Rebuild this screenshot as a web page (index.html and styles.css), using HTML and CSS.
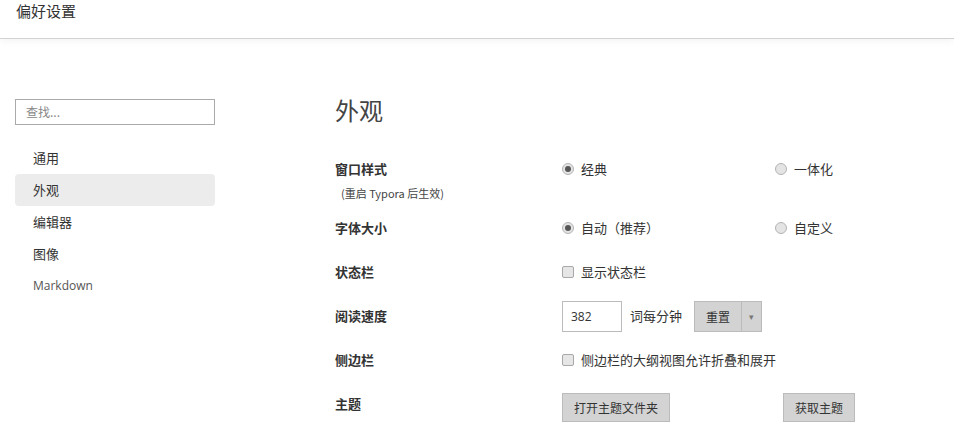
FILE: index.html
```html
<!DOCTYPE html>
<html lang="zh-CN">
<head>
    <meta charset="UTF-8">
    <title>偏好设置</title>
    <link rel="stylesheet" href="styles.css">
</head>
<body>
    <div class="header">偏好设置</div>
    <div class="layout">
        <div class="sidebar">
            <input class="search" type="text" placeholder="查找...">
            <ul class="nav">
                <li>通用</li>
                <li class="active">外观</li>
                <li>编辑器</li>
                <li>图像</li>
                <li class="latin">Markdown</li>
            </ul>
        </div>
        <div class="main">
            <h1>外观</h1>
            <div class="rows">
                <div class="row tall">
                    <div class="label">窗口样式<span class="hint">(重启 Typora 后生效)</span></div>
                    <div class="opt"><span class="radio checked"></span>经典</div>
                    <div class="opt"><span class="radio"></span>一体化</div>
                </div>
                <div class="row">
                    <div class="label">字体大小</div>
                    <div class="opt"><span class="radio checked"></span>自动（推荐）</div>
                    <div class="opt"><span class="radio"></span>自定义</div>
                </div>
                <div class="row">
                    <div class="label">状态栏</div>
                    <div class="opt wide"><span class="check"></span>显示状态栏</div>
                </div>
                <div class="row">
                    <div class="label">阅读速度</div>
                    <div class="opt wide">
                        <input class="num" type="text" value="382">
                        <span class="unit">词每分钟</span>
                        <span class="split">
                            <button class="btn">重置</button><button class="btn caret">&#9662;</button>
                        </span>
                    </div>
                </div>
                <div class="row">
                    <div class="label">侧边栏</div>
                    <div class="opt wide"><span class="check"></span>侧边栏的大纲视图允许折叠和展开</div>
                </div>
                <div class="row theme">
                    <div class="label">主题</div>
                    <div class="opt"><button class="btn">打开主题文件夹</button></div>
                    <div class="opt right"><button class="btn">获取主题</button></div>
                </div>
            </div>
        </div>
    </div>
</body>
</html>
```

FILE: styles.css
```css
body {
    margin: 0;
    font-family: "Noto Sans CJK SC", "Open Sans", sans-serif;
    color: #333;
    background: #fff;
}
.header {
    height: 38px;
    padding-left: 16px;
    font-size: 15px;
    line-height: 22px;
    color: #333;
    border-bottom: 1px solid #d2d2d2;
    box-shadow: 0 2px 8px rgba(0,0,0,0.05);
}
.layout {
    display: flex;
    padding-top: 59px;
}
.sidebar {
    width: 200px;
    margin-left: 15px;
}
.search {
    box-sizing: border-box;
    width: 200px;
    height: 26px;
    margin: 0;
    padding: 0 10px;
    border: 1px solid #aaa;
    font-family: inherit;
    font-size: 12px;
    color: #333;
    outline: none;
}
.search::placeholder {
    color: #888;
}
.nav {
    list-style: none;
    margin: 17px 0 0;
    padding: 0;
}
.nav li {
    height: 32px;
    line-height: 31px;
    padding-left: 18px;
    font-size: 13px;
    color: #333;
    border-radius: 4px;
}
.nav li.active {
    background: #ececec;
}
.nav li.latin {
    font-family: "Open Sans", sans-serif;
    font-size: 12px;
    color: #555;
}
.main {
    margin-left: 120px;
}
h1 {
    margin: -6px 0 0;
    font-size: 24px;
    font-weight: normal;
    line-height: 36px;
    color: #444;
}
.rows {
    margin-top: 29px;
}
.row {
    display: flex;
    align-items: flex-start;
    height: 44px;
    font-size: 13px;
    line-height: 24px;
}
.row.tall {
    height: 59px;
}
.label {
    width: 227px;
    font-weight: bold;
    color: #333;
}
.hint {
    display: block;
    margin-left: 6px;
    font-size: 11px;
    font-weight: normal;
    color: #444;
    line-height: 24px;
}
.opt {
    width: 213px;
    display: flex;
    align-items: center;
    height: 24px;
}
.opt.wide {
    width: auto;
}
.opt.right {
    margin-left: 8px;
}
.row.theme .opt {
    align-items: flex-start;
    padding-top: 1px;
}
.radio {
    box-sizing: border-box;
    width: 12px;
    height: 12px;
    margin-right: 7px;
    border: 1px solid #b4b4b4;
    border-radius: 50%;
    background: #e4e4e4;
    position: relative;
}
.radio.checked::after {
    content: "";
    position: absolute;
    left: 2px;
    top: 2px;
    width: 6px;
    height: 6px;
    border-radius: 50%;
    background: #555;
}
.check {
    box-sizing: border-box;
    width: 12px;
    height: 12px;
    margin-right: 7px;
    border: 1px solid #a8a8a8;
    border-radius: 2px;
    background: #e6e6e6;
}
.num {
    box-sizing: border-box;
    width: 60px;
    height: 31px;
    margin: 0;
    padding: 0 8px;
    border: 1px solid #bbb;
    font-family: "Open Sans", sans-serif;
    font-size: 12px;
    color: #333;
}
.unit {
    margin-left: 8px;
}
.split {
    display: flex;
    margin-left: 12px;
}
.btn {
    box-sizing: border-box;
    height: 29px;
    padding: 0 11px;
    border: 1px solid #bbb;
    background: #d3d3d3;
    font-family: inherit;
    font-size: 12px;
    color: #333;
    cursor: pointer;
}
.split .btn {
    height: 31px;
    padding: 0 11px;
}
.split .caret {
    width: 21px;
    padding: 0;
    font-size: 9px;
    color: #777;
}
.split .btn + .btn {
    margin-left: -1px;
}
```
